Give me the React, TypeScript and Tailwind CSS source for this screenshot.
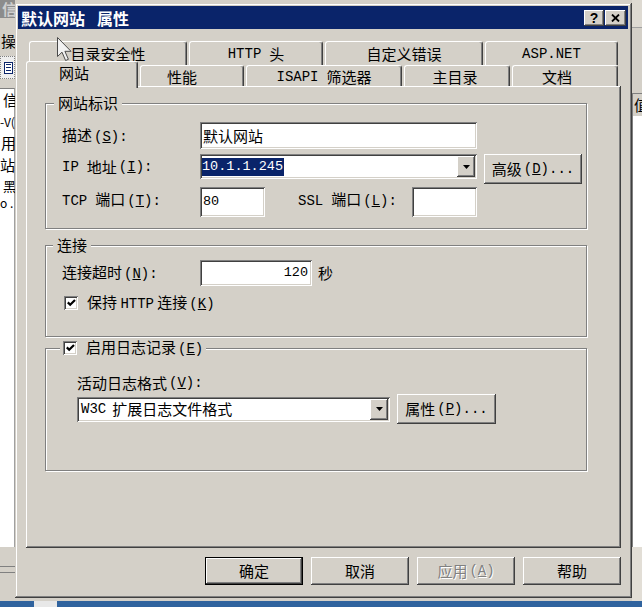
import React from "react";

const RAISED =
  "shadow-[inset_-1px_-1px_#404040,inset_1px_1px_#ffffff,inset_-2px_-2px_#808080,inset_2px_2px_#d4d0c8]";
const SUNKEN =
  "shadow-[inset_1px_1px_#808080,inset_-1px_-1px_#ffffff,inset_2px_2px_#404040,inset_-2px_-2px_#d4d0c8]";
const ETCHED = "border border-[#808080] shadow-[inset_1px_1px_#ffffff,1px_1px_#ffffff]";

function M({ children, className = "" }: { children: React.ReactNode; className?: string }) {
  return <span className={`font-['Liberation_Mono',monospace] text-[14px] ${className}`}>{children}</span>;
}

function Acc({ k, colon = false }: { k: string; colon?: boolean }) {
  return (
    <M className="ml-[2px]">
      (<u>{k}</u>){colon ? ":" : ""}
    </M>
  );
}

function Check() {
  return (
    <div className={`w-[14px] h-[14px] shrink-0 bg-white ${SUNKEN} flex items-center justify-center`}>
      <svg width="9" height="8" viewBox="0 0 9 8">
        <polyline points="0.8,3.4 3.2,5.8 8,1" fill="none" stroke="#000" strokeWidth="2.2" />
      </svg>
    </div>
  );
}

function DropBtn() {
  return (
    <div className={`w-[18px] h-full shrink-0 bg-[#d4d0c8] ${RAISED} flex items-center justify-center`}>
      <svg width="7" height="4" viewBox="0 0 7 4">
        <path d="M0 0H7L3.5 4Z" fill="#000" />
      </svg>
    </div>
  );
}

function Tab({
  w,
  children,
  selected = false,
  h,
  extra = "",
}: {
  w: string;
  children: React.ReactNode;
  selected?: boolean;
  h: string;
  extra?: string;
}) {
  return (
    <div
      className={`${w} ${h} ${extra} shrink-0 bg-[#d4d0c8] rounded-t-[3px] border-t border-l border-white border-r border-r-[#404040] shadow-[inset_-1px_0_#808080] flex items-center justify-center whitespace-nowrap ${
        selected ? "relative z-10" : ""
      }`}
    >
      {children}
    </div>
  );
}

export default function App() {
  return (
    <div className="relative w-[642px] h-[607px] overflow-hidden bg-[#d4d0c8] font-['Noto_Sans_CJK_SC',sans-serif] text-[15px] leading-[20px] text-black">
      {/* left backdrop window */}
      <div className="absolute left-0 top-0 w-[15px] h-[601px] flex flex-col overflow-hidden">
        <div className="h-[18px] shrink-0 bg-[#8c8c8c] text-[#cfcfcf] font-bold leading-[18px] pl-[2px] whitespace-nowrap">信</div>
        <div className="h-[38px] shrink-0 pt-[13px] pl-[1px] whitespace-nowrap">操</div>
        <div className="h-[23px] shrink-0 border border-dotted border-[#808080] bg-[#eeeeee] flex items-center pl-[3px]">
          <div className="w-[9px] h-[12px] border border-[#0a246a] bg-white flex flex-col justify-center gap-[2px] px-[1px]">
            <div className="h-[1px] bg-[#0a246a]" />
            <div className="h-[1px] bg-[#0a246a]" />
            <div className="h-[1px] bg-[#0a246a]" />
          </div>
        </div>
        <div className="h-[9px] shrink-0" />
        <div className="h-[459px] shrink-0 bg-white border-t border-[#808080] border-r border-r-[#a0a0a0] flex flex-col whitespace-nowrap">
          <div className="h-[22px] pl-[3px] leading-[22px]">信</div>
          <div className="h-[22px] pl-0 leading-[22px] text-[12px]">-V(</div>
          <div className="h-[20px] pl-[1px] leading-[20px]">用</div>
          <div className="h-[24px] pl-0 leading-[24px]">站</div>
          <div className="h-[18px] pl-[3px] leading-[18px] text-[13px]">黑</div>
          <div className="h-[16px] pl-0 leading-[16px] text-[12px]">o .</div>
        </div>
        <div className="flex-1 flex flex-col">
          <div className="h-[19px]" />
          <div className="h-[1px] bg-[#808080]" />
          <div className="h-[5px]" />
          <div className="h-[1px] bg-[#808080]" />
        </div>
      </div>

      {/* right backdrop window */}
      <div className="absolute left-[632px] top-0 w-[10px] h-[601px] flex flex-col overflow-hidden">
        <div className="h-[28px] shrink-0 bg-[#dedad2] border-b border-[#a0a0a0]" />
        <div className="h-[66px] shrink-0 border-b border-[#808080]" />
        <div className="h-[22px] shrink-0 border-l border-[#808080] leading-[22px] pl-[1px] whitespace-nowrap bg-[#d4d0c8]">值</div>
        <div className="h-[431px] shrink-0 bg-white border-l border-[#808080]" />
        <div className="flex-1 bg-[#e2ded6]" />
      </div>

      {/* desktop strip */}
      <div className="absolute left-0 bottom-0 w-[642px] h-[6px] bg-[#30639e] flex">
        <div className="ml-[34px] w-[23px] h-full bg-[#e8e8e8]" />
      </div>

      {/* dialog window */}
      <div className={`absolute left-[15px] top-[3px] w-[617px] h-[595px] bg-[#d4d0c8] pt-[3px] pl-[3px] pr-[4px] pb-[3px] flex flex-col shadow-[inset_-1px_-1px_#404040,inset_1px_1px_#d4d0c8,inset_-2px_-2px_#808080,inset_2px_2px_#ffffff]`}>
        {/* title bar */}
        <div className="h-[23px] shrink-0 bg-[#0a246a] flex items-center pl-[3px] pr-[2px]">
          <span className="text-white font-bold text-[16px] leading-[22px] whitespace-nowrap">默认网站</span>
          <span className="ml-[12px] text-white font-bold text-[16px] leading-[22px] whitespace-nowrap">属性</span>
          <div className="ml-auto flex gap-[1px]">
            <div className={`w-[20px] h-[16px] bg-[#d4d0c8] ${RAISED} flex items-center justify-center font-['Liberation_Sans',sans-serif] font-bold text-[14px] leading-[16px]`}>
              ?
            </div>
            <div className={`w-[21px] h-[16px] bg-[#d4d0c8] ${RAISED} flex items-center justify-center`}>
              <svg width="9" height="8" viewBox="0 0 9 8">
                <path d="M1 0.5L8 7.5M8 0.5L1 7.5" stroke="#000" strokeWidth="1.8" />
              </svg>
            </div>
          </div>
        </div>

        {/* body */}
        <div className="flex-1 flex flex-col pl-[8px] pr-[7px] pt-[12px]">
          {/* back tab row */}
          <div className="h-[22px] flex gap-[2px] pl-[3px]">
            <Tab w="w-[158px]" h="h-[24px]">目录安全性</Tab>
            <Tab w="w-[134px]" h="h-[24px]">
              <M>HTTP</M>
              <span className="ml-[8px]">头</span>
            </Tab>
            <Tab w="w-[158px]" h="h-[24px]">自定义错误</Tab>
            <Tab w="w-[133px]" h="h-[24px]">
              <M className="text-[13px]">ASP.NET</M>
            </Tab>
          </div>
          {/* front tab row */}
          <div className="relative h-[25px] -mt-[2px] flex items-end gap-[2px]">
            <Tab w="w-[112px]" h="h-[27px]" selected extra="-mb-[2px] pr-[16px] pb-[4px]">
              网站
            </Tab>
            <Tab w="w-[104px]" h="h-[21px]" extra="pr-[20px] pt-[2px]">
              性能
            </Tab>
            <Tab w="w-[156px]" h="h-[21px]" extra="pt-[2px]">
              <M>ISAPI</M>
              <span className="ml-[8px]">筛选器</span>
            </Tab>
            <Tab w="w-[106px]" h="h-[21px]" extra="pt-[2px] pr-[4px]">
              主目录
            </Tab>
            <Tab w="w-[106px]" h="h-[21px]" extra="pt-[2px] pr-[16px]">
              文档
            </Tab>
          </div>

          {/* panel */}
          <div className={`h-[462px] shrink-0 ${RAISED} bg-[#d4d0c8] pl-[19px] pt-[17px] flex flex-col`}>
            {/* group 1 */}
            <div className={`relative w-[542px] h-[126px] shrink-0 ${ETCHED} pl-[16px] pt-[18px] flex flex-col`}>
              <div className="absolute -top-[11px] left-[8px] px-[4px] bg-[#d4d0c8]">网站标识</div>
              <div className="h-[27px] flex items-center">
                <div className="w-[138px] whitespace-nowrap">
                  描述<Acc k="S" colon />
                </div>
                <div className={`w-[277px] h-[27px] bg-white ${SUNKEN} flex items-center pl-[3px]`}>默认网站</div>
              </div>
              <div className="mt-[5px] h-[30px] flex items-start">
                <div className="w-[138px] h-[25px] flex items-center whitespace-nowrap">
                  <M>IP</M>
                  <span className="ml-[8px]">地址</span>
                  <Acc k="I" colon />
                </div>
                <div className={`w-[277px] h-[25px] bg-white ${SUNKEN} flex items-stretch p-[2px]`}>
                  <div className="flex-1 flex items-center">
                    <span className="bg-[#0a246a] text-white h-[18px] leading-[18px] pr-[1px] font-['Liberation_Mono',monospace] text-[13.5px]">
                      10.1.1.245
                    </span>
                  </div>
                  <DropBtn />
                </div>
                <div className={`ml-[7px] w-[98px] h-[30px] bg-[#d4d0c8] ${RAISED} flex items-center justify-center whitespace-nowrap`}>
                  高级<Acc k="D" />
                  <M>...</M>
                </div>
              </div>
              <div className="mt-[3px] h-[30px] flex items-center">
                <div className="w-[138px] whitespace-nowrap -mt-[4px]">
                  <M>TCP</M>
                  <span className="ml-[8px]">端口</span>
                  <Acc k="T" colon />
                </div>
                <div className={`w-[65px] h-[30px] bg-white ${SUNKEN} flex items-center pl-[3px] font-['Liberation_Mono',monospace] text-[13.5px]`}>
                  80
                </div>
                <div className="ml-[33px] w-[114px] whitespace-nowrap -mt-[4px]">
                  <M>SSL</M>
                  <span className="ml-[8px]">端口</span>
                  <Acc k="L" colon />
                </div>
                <div className={`w-[65px] h-[30px] bg-white ${SUNKEN}`} />
              </div>
            </div>

            {/* group 2 */}
            <div className={`relative mt-[16px] w-[542px] h-[92px] shrink-0 ${ETCHED} pl-[16px] pt-[14px] flex flex-col`}>
              <div className="absolute -top-[11px] left-[7px] px-[4px] bg-[#d4d0c8]">连接</div>
              <div className="h-[26px] flex items-center">
                <div className="w-[138px] whitespace-nowrap">
                  连接超时<Acc k="N" colon />
                </div>
                <div className={`w-[112px] h-[26px] bg-white ${SUNKEN} flex items-center justify-end pr-[4px] font-['Liberation_Mono',monospace] text-[13.5px]`}>
                  120
                </div>
                <span className="ml-[6px]">秒</span>
              </div>
              <div className="mt-[7px] h-[20px] flex items-center pl-[2px]">
                <Check />
                <span className="ml-[9px] whitespace-nowrap">
                  保持 <M>HTTP</M> 连接<Acc k="K" />
                </span>
              </div>
            </div>

            {/* group 3 */}
            <div className={`relative mt-[11px] w-[542px] h-[123px] shrink-0 ${ETCHED} pl-[31px] pt-[24px] flex flex-col`}>
              <div className="absolute -top-[11px] left-[14px] px-[3px] bg-[#d4d0c8] flex items-center h-[20px]">
                <Check />
                <span className="ml-[9px] whitespace-nowrap">
                  启用日志记录<Acc k="E" />
                </span>
              </div>
              <div className="h-[20px] flex items-center whitespace-nowrap">
                活动日志格式<Acc k="V" colon />
              </div>
              <div className="mt-[1px] h-[30px] flex items-center">
                <div className={`w-[313px] h-[25px] bg-white ${SUNKEN} flex items-stretch p-[2px]`}>
                  <div className="flex-1 flex items-center pl-[2px] whitespace-nowrap">
                    <M className="text-[11px] mr-[6px]">W3C</M>扩展日志文件格式
                  </div>
                  <DropBtn />
                </div>
                <div className={`ml-[7px] w-[99px] h-[30px] bg-[#d4d0c8] ${RAISED} flex items-center justify-center whitespace-nowrap`}>
                  属性<Acc k="P" />
                  <M>...</M>
                </div>
              </div>
            </div>
          </div>

          {/* bottom buttons */}
          <div className="mt-[9px] flex justify-end gap-[8px]">
            <div className="w-[98px] h-[28px] border border-black">
              <div className={`w-full h-full bg-[#d4d0c8] ${RAISED} flex items-center justify-center`}>确定</div>
            </div>
            <div className={`w-[98px] h-[28px] bg-[#d4d0c8] ${RAISED} flex items-center justify-center`}>取消</div>
            <div className={`w-[98px] h-[28px] bg-[#d4d0c8] ${RAISED} flex items-center justify-center text-[#808080] [text-shadow:1px_1px_#ffffff] whitespace-nowrap`}>
              应用<Acc k="A" />
            </div>
            <div className={`w-[98px] h-[28px] bg-[#d4d0c8] ${RAISED} flex items-center justify-center`}>帮助</div>
          </div>
        </div>
      </div>

      {/* mouse cursor */}
      <svg className="absolute left-[57px] top-[37px] z-50" width="16" height="26" viewBox="0 0 16 26">
        <path d="M0.5 0.5V19.5L5 15.2L8.6 23.5L11.4 22.3L7.9 14.3H14Z" fill="#f2f2f2" stroke="#4a4a4a" strokeWidth="1" />
      </svg>
    </div>
  );
}
